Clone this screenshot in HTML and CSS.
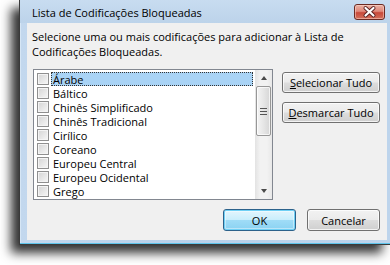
FILE: index.html
```html
<!DOCTYPE html>
<html lang="pt">
<head>
<meta charset="utf-8">
<title>Lista de Codificações Bloqueadas</title>
<link rel="stylesheet" href="styles.css">
</head>
<body>
<div class="window">
  <div class="titlebar">
    <span class="title">Lista de Codificações Bloqueadas</span>
    <button class="close" aria-label="Fechar">
      <svg width="31" height="16" viewBox="0 0 31 16">
        <path d="M11.5 4 L19.5 11.5 M19.5 4 L11.5 11.5" stroke="#5a2020" stroke-width="4" stroke-linecap="round" fill="none"/>
        <path d="M11.5 4 L19.5 11.5 M19.5 4 L11.5 11.5" stroke="#ffffff" stroke-width="2.2" stroke-linecap="round" fill="none"/>
      </svg>
    </button>
  </div>
  <div class="client">
    <p class="desc">Selecione uma ou mais codificações para adicionar à Lista de Codificações Bloqueadas.</p>
    <div class="main">
      <div class="listbox">
        <ul class="items">
          <li class="item"><span class="cb"></span><span class="lbl selected">Árabe</span></li>
          <li class="item"><span class="cb"></span><span class="lbl">Báltico</span></li>
          <li class="item"><span class="cb"></span><span class="lbl">Chinês Simplificado</span></li>
          <li class="item"><span class="cb"></span><span class="lbl">Chinês Tradicional</span></li>
          <li class="item"><span class="cb"></span><span class="lbl">Cirílico</span></li>
          <li class="item"><span class="cb"></span><span class="lbl">Coreano</span></li>
          <li class="item"><span class="cb"></span><span class="lbl">Europeu Central</span></li>
          <li class="item"><span class="cb"></span><span class="lbl">Europeu Ocidental</span></li>
          <li class="item"><span class="cb"></span><span class="lbl">Grego</span></li>
        </ul>
        <div class="scrollbar">
          <div class="arrow"><span class="tri up"></span></div>
          <div class="track">
            <div class="thumb"><span class="grip"></span></div>
          </div>
          <div class="arrow"><span class="tri down"></span></div>
        </div>
      </div>
      <div class="side">
        <button class="btn wide"><u>S</u>elecionar Tudo</button>
        <button class="btn wide"><u>D</u>esmarcar Tudo</button>
      </div>
    </div>
    <div class="footer">
      <button class="btn std default">OK</button>
      <button class="btn std">Cancelar</button>
    </div>
  </div>
</div>
</body>
</html>
```
FILE: styles.css
```css
html, body {
  margin: 0;
  padding: 0;
}
body {
  width: 390px;
  height: 265px;
  overflow: hidden;
  background: #ffffff;
  font-family: "Open Sans", "Liberation Sans", sans-serif;
  font-size: 11px;
  color: #000;
}
.window {
  margin-left: 19px;
  width: 371px;
  height: 245px;
  box-sizing: border-box;
  border-left: 1px solid #3a3a3a;
  border-bottom: 1px solid #3a3a3a;
  background: linear-gradient(to right, #c3d8ee, #b9d1ea 40%, #bdd4ec);
  box-shadow: -8px 8px 10px rgba(0, 0, 0, 0.8), inset 0 -1px 0 #5ec4ea, inset 1px 0 0 #d6e6f5;
  display: flex;
  flex-direction: column;
}
.titlebar {
  height: 23px;
  display: flex;
  align-items: flex-start;
  padding-left: 12px;
  background: linear-gradient(#c8dcf0, #bcd3ea);
}
.title {
  padding-top: 2px;
  line-height: 21px;
  white-space: nowrap;
}
.close {
  margin-left: auto;
  margin-top: 4px;
  margin-right: 5px;
  width: 31px;
  height: 16px;
  padding: 0;
  border: 1px solid #6b2a22;
  border-radius: 3px;
  background: linear-gradient(#eab2a4 0%, #e0887a 45%, #c8493a 55%, #d3705c 100%);
  box-shadow: inset 0 0 0 1px rgba(255, 220, 210, 0.5);
  display: flex;
  align-items: center;
  justify-content: center;
}
.close svg {
  display: block;
  margin: -1px;
}
.client {
  flex: 1;
  margin: 0 3px 4px 7px;
  background: #f0f0f0;
  display: flex;
  flex-direction: column;
  padding: 0 7px 0 0;
}
.desc {
  margin: 0;
  padding: 6px 0 0 5px;
  line-height: 15px;
}
.main {
  margin-top: 10px;
  display: flex;
  align-items: flex-start;
}
.listbox {
  margin-left: 6px;
  width: 240px;
  height: 131px;
  box-sizing: border-box;
  border: 1px solid #828790;
  background: #fff;
  display: flex;
}
.items {
  list-style: none;
  margin: 0;
  padding: 2px 2px 0 3px;
  flex: 1;
}
.item {
  height: 14px;
  display: flex;
  align-items: flex-start;
}
.cb {
  width: 10px;
  height: 10px;
  margin-top: 1px;
  margin-right: 2px;
  border: 1px solid #8f8f8f;
  background: linear-gradient(135deg, #d4d4d4, #f7f7f7);
  box-shadow: inset 0 0 0 1px #f4f4f4;
  flex: none;
}
.lbl {
  flex: 1;
  height: 14px;
  box-sizing: border-box;
  padding-left: 1px;
  line-height: 13px;
  border: 1px solid transparent;
  white-space: nowrap;
}
.lbl.selected {
  background: #a9d3f5;
  border: 1px dotted #333;
}
.scrollbar {
  width: 17px;
  display: flex;
  flex-direction: column;
  background: linear-gradient(to right, #e3e3e3, #f2f2f2 30%, #f2f2f2 70%, #e8e8e8);
}
.arrow {
  height: 16px;
  display: flex;
  align-items: center;
  justify-content: center;
}
.tri {
  width: 0;
  height: 0;
  border-left: 3.5px solid transparent;
  border-right: 3.5px solid transparent;
}
.tri.up {
  border-bottom: 4px solid #4a4a4a;
}
.tri.down {
  border-top: 4px solid #4a4a4a;
}
.track {
  flex: 1;
  display: flex;
  flex-direction: column;
}
.thumb {
  height: 50px;
  margin: 0 1px;
  box-sizing: border-box;
  border: 1px solid #979797;
  border-radius: 2px;
  background: linear-gradient(to right, #f4f4f4, #e6e6e6 50%, #d6d6d6);
  box-shadow: inset 0 0 0 1px rgba(255, 255, 255, 0.7);
  display: flex;
  align-items: center;
  justify-content: center;
}
.grip {
  width: 7px;
  height: 7px;
  background: repeating-linear-gradient(#555 0 1px, transparent 1px 3px);
}
.side {
  margin-left: 9px;
  padding-top: 3px;
  display: flex;
  flex-direction: column;
  gap: 9px;
}
.btn {
  font-family: inherit;
  font-size: 11px;
  color: #000;
  height: 21px;
  padding: 0;
  border: 1px solid #707070;
  border-radius: 3px;
  background: linear-gradient(#f2f2f2 0%, #ebebeb 48%, #dddddd 52%, #cfcfcf 100%);
  box-shadow: inset 0 0 0 1px rgba(255, 255, 255, 0.75);
  line-height: 17px;
  white-space: nowrap;
}
.btn u {
  text-decoration: underline;
}
.wide {
  width: 98px;
}
.footer {
  margin-top: 9px;
  display: flex;
  justify-content: flex-end;
  gap: 11px;
}
.std {
  width: 73px;
  height: 22px;
}
.default {
  border-color: #2c628b;
  background: linear-gradient(#e5f6fd 0%, #c9eefc 48%, #9fdcf7 52%, #8ad2f2 100%);
  box-shadow: inset 0 0 0 1px #6fd0f5, inset 0 0 0 2px rgba(255, 255, 255, 0.4);
}
```
